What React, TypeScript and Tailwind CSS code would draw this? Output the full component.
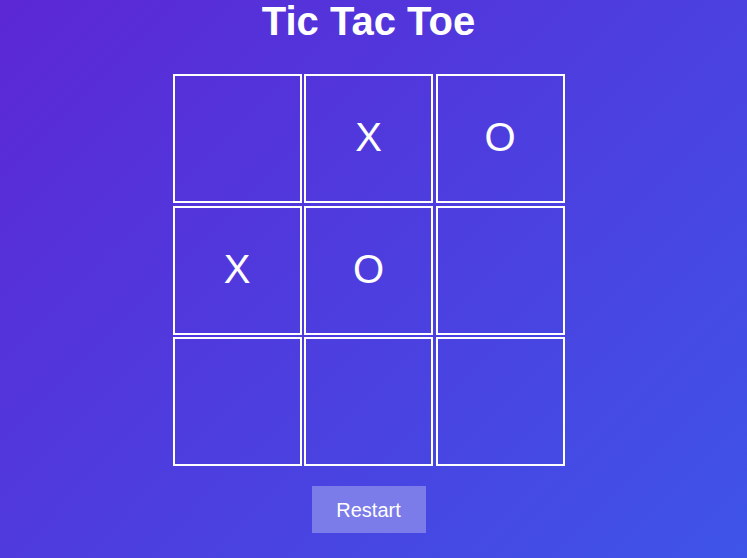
const board: string[] = ["", "X", "O", "X", "O", "", "", "", ""];

export default function App() {
  return (
    <div
      className="flex min-h-screen w-full flex-col items-center bg-[linear-gradient(135deg,#5c27d5_0%,#3e54e8_100%)] pr-[10px] text-white"
      style={{ fontFamily: '"Liberation Sans", Arial, sans-serif' }}
    >
      <h1 className="text-[40px] font-bold leading-[42px]">Tic Tac Toe</h1>

      <div className="mt-[32px] grid grid-cols-[129px_129px_129px] gap-[2.5px]">
        {board.map((v, i) => (
          <button
            key={i}
            className="flex h-[129px] w-[129px] items-center justify-center border-2 border-white pb-[3px] text-[40px] leading-none text-white"
          >
            {v}
          </button>
        ))}
      </div>

      <button className="mt-[20px] h-[47px] w-[114px] bg-[#7b7be9] text-[20px] text-white">
        Restart
      </button>
    </div>
  );
}
